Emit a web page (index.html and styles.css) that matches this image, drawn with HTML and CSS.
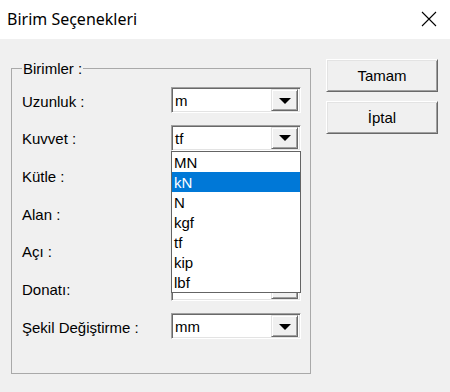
FILE: index.html
```html
<!DOCTYPE html>
<html>
<head>
<meta charset="utf-8">
<link rel="stylesheet" href="styles.css">
</head>
<body>
<div class="window">
  <div class="titlebar">
    <span class="title">Birim Seçenekleri</span>
    <svg class="close" width="16" height="16" viewBox="0 0 16 16"><path d="M1 1 L15 15 M15 1 L1 15" stroke="#000" stroke-width="1.1" fill="none"/></svg>
  </div>
  <div class="content">
    <fieldset class="group">
      <legend class="legend">Birimler :</legend>
      <div class="rows">
        <div class="row"><span class="label">Uzunluk :</span><div class="combo"><span class="value">m</span><span class="dbtn"><span class="arrow"></span></span></div></div>
        <div class="row"><span class="label">Kuvvet :</span><div class="combo"><span class="value">tf</span><span class="dbtn"><span class="arrow"></span></span>
          <div class="list">
            <div class="item">MN</div>
            <div class="item sel">kN</div>
            <div class="item">N</div>
            <div class="item">kgf</div>
            <div class="item">tf</div>
            <div class="item">kip</div>
            <div class="item">lbf</div>
          </div>
        </div></div>
        <div class="row"><span class="label">Kütle :</span><div class="combo"><span class="value"></span><span class="dbtn"><span class="arrow"></span></span></div></div>
        <div class="row"><span class="label">Alan :</span><div class="combo"><span class="value"></span><span class="dbtn"><span class="arrow"></span></span></div></div>
        <div class="row"><span class="label">Açı :</span><div class="combo"><span class="value"></span><span class="dbtn"><span class="arrow"></span></span></div></div>
        <div class="row"><span class="label">Donatı:</span><div class="combo"><span class="value"></span><span class="dbtn"><span class="arrow"></span></span></div></div>
        <div class="row"><span class="label">Şekil Değiştirme :</span><div class="combo"><span class="value">mm</span><span class="dbtn"><span class="arrow"></span></span></div></div>
      </div>
    </fieldset>
    <div class="buttons">
      <div class="btn">Tamam</div>
      <div class="btn">İptal</div>
    </div>
  </div>
</div>
</body>
</html>
```
FILE: styles.css
```css
html, body {
  margin: 0;
  padding: 0;
}
body {
  width: 450px;
  height: 392px;
  background: #f0f0f0;
  overflow: hidden;
  font-family: "Liberation Sans", Arial, sans-serif;
  font-size: 15px;
  color: #000;
}
.window {
  width: 450px;
  height: 392px;
  display: flex;
  flex-direction: column;
}
.titlebar {
  height: 39px;
  background: #fff;
  display: flex;
  align-items: center;
  justify-content: space-between;
  padding: 0 13px 0 7px;
  box-sizing: border-box;
}
.title {
  font-family: "Noto Sans", "Open Sans", sans-serif;
  font-size: 16px;
  margin-top: -2px;
}
.close {
  margin-top: -2px;
}
.content {
  display: flex;
  align-items: flex-start;
  padding: 20px 0 0 11px;
}
.group {
  margin: 1px 0 0 0;
  width: 300px;
  height: 314px;
  box-sizing: border-box;
  border: 1px solid #a9a9a9;
  padding: 0 9px 0 10px;
  min-width: 0;
}
.legend {
  padding: 0 1px;
  margin-left: 0;
  line-height: 17px;
}
.rows {
  display: flex;
  flex-direction: column;
  gap: 11.7px;
  margin-top: 10px;
}
.row {
  display: flex;
  align-items: center;
  justify-content: space-between;
  height: 26px;
}
.label {
  padding-top: 2px;
}
.combo {
  position: relative;
  width: 130px;
  height: 26px;
  box-sizing: border-box;
  border-top: 1px solid #a0a0a0;
  border-left: 1px solid #a0a0a0;
  border-right: 1px solid #ffffff;
  border-bottom: 1px solid #ffffff;
  box-shadow: inset 1px 1px 0 #696969, inset -1px -1px 0 #e3e3e3;
  background: #fff;
  display: flex;
  align-items: center;
  padding: 2px 2px 2px 2px;
}
.value {
  flex: 1;
  padding-left: 1px;
  padding-top: 1px;
}
.dbtn {
  width: 27px;
  height: 22px;
  box-sizing: border-box;
  background: #f0f0f0;
  border-top: 1px solid #e3e3e3;
  border-left: 1px solid #e3e3e3;
  border-right: 1px solid #696969;
  border-bottom: 1px solid #696969;
  box-shadow: inset 1px 1px 0 #ffffff, inset -1px -1px 0 #a0a0a0;
  display: flex;
  align-items: center;
  justify-content: center;
}
.arrow {
  width: 0;
  height: 0;
  border-left: 6px solid transparent;
  border-right: 6px solid transparent;
  border-top: 6px solid #000;
  margin-top: 1px;
}
.list {
  position: absolute;
  left: -1px;
  top: 25px;
  width: 130px;
  box-sizing: border-box;
  border: 1px solid #646464;
  background: #fff;
  z-index: 5;
}
.item {
  height: 20px;
  line-height: 21px;
  padding-left: 2px;
}
.item.sel {
  background: #0078d7;
  color: #fff;
}
.buttons {
  display: flex;
  flex-direction: column;
  gap: 9px;
  margin-left: 15px;
}
.btn {
  width: 112px;
  height: 33px;
  box-sizing: border-box;
  background: #f0f0f0;
  border-top: 1px solid #ffffff;
  border-left: 1px solid #ffffff;
  border-right: 1px solid #696969;
  border-bottom: 1px solid #696969;
  box-shadow: inset 1px 1px 0 #e3e3e3, inset -1px -1px 0 #a0a0a0;
  display: flex;
  align-items: center;
  justify-content: center;
}
```
